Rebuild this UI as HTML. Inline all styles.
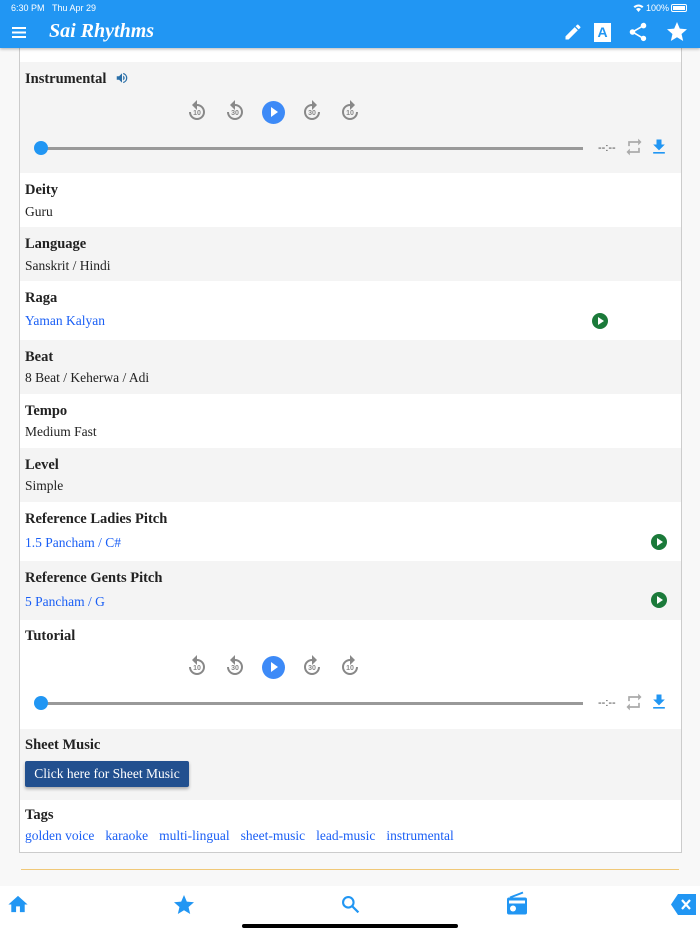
<!DOCTYPE html>
<html><head><meta charset="utf-8"><style>
*{margin:0;padding:0;box-sizing:border-box}
body{width:700px;height:934px;background:#f8f8f8;position:relative;overflow:hidden;font-family:"Liberation Serif",serif;color:#222}
.hdr{position:absolute;left:0;top:0;width:700px;height:48px;background:#2196f3;color:#fff;box-shadow:0 1px 3px rgba(0,0,0,.3);z-index:2}
.st{position:absolute;top:3px;font:9px "Liberation Sans",sans-serif}
.title{position:absolute;left:49px;top:20px;font:italic bold 20px "Liberation Serif",serif}
.card{position:absolute;left:19px;top:48px;width:663px;height:805px;background:#fff;border:1px solid #ccc;border-top:none}
.row{position:absolute;left:0;width:661px}
.g{background:#f4f4f4}
.lab{position:absolute;left:5px;font-weight:bold;font-size:14.5px}
.val{position:absolute;left:5px;font-size:13.5px}
.blue{color:#1a5ff5}
.pb{position:absolute;width:16px;height:16px;border-radius:50%;background:#1b7a3a}
.pb:after{content:"";position:absolute;left:6px;top:4px;border-left:6px solid #fff;border-top:4px solid transparent;border-bottom:4px solid transparent}
.ic{position:absolute;width:24px;height:24px}
.ic span{position:absolute;left:0;top:11px;width:24px;text-align:center;font:bold 7px "Liberation Sans",sans-serif;color:#888}
.play{position:absolute;width:23px;height:23px;border-radius:50%;background:#3d8af7}
.play:after{content:"";position:absolute;left:9px;top:6px;border-left:7px solid #fff;border-top:5.5px solid transparent;border-bottom:5.5px solid transparent}
.track{position:absolute;left:21px;width:542px;height:3px;background:#999}
.knob{position:absolute;left:14px;width:14px;height:14px;border-radius:50%;background:#2196f3}
.time{position:absolute;left:578px;font:11px "Liberation Sans",sans-serif;color:#444}
.btn{position:absolute;left:5px;top:32px;width:164px;height:26px;background:#22508f;color:#fff;font-size:13.5px;text-align:center;line-height:26px;border-radius:2px;box-shadow:0 2px 3px rgba(0,0,0,.3)}
.tags span{margin-right:11px}
.bot{position:absolute;left:0;top:886px;width:700px;height:48px;background:#fff}
</style></head><body>
<div class="hdr">
<div class="st" style="left:11px">6:30 PM&nbsp;&nbsp;&nbsp;Thu Apr 29</div>
<div class="st" style="left:646px">100%</div>
<svg style="position:absolute;left:633px;top:4px" width="11" height="8" viewBox="0 0 11 8"><path d="M0.5 2.5Q5.5-1.5 10.5 2.5L9 4Q5.5 1 2 4Z M3 5Q5.5 3 8 5L5.5 8Z" fill="#fff"/></svg>
<div style="position:absolute;left:671px;top:4px;width:16px;height:8px;border:1px solid #fff;border-radius:2px;padding:1px"><div style="background:#fff;width:100%;height:100%"></div></div>
<svg style="position:absolute;left:12px;top:27px" width="14" height="11"><rect y="0" width="14" height="2" fill="#fff"/><rect y="4.5" width="14" height="2" fill="#fff"/><rect y="9" width="14" height="2" fill="#fff"/></svg>
<div class="title">Sai Rhythms</div>
<svg style="position:absolute;left:563px;top:22px" width="20" height="20" viewBox="0 0 24 24"><path d="M3 17.25V21h3.75L17.81 9.94l-3.75-3.75L3 17.25zM20.71 7.04a1 1 0 000-1.41l-2.34-2.34a1 1 0 00-1.41 0l-1.83 1.83 3.75 3.75 1.83-1.83z" fill="#fff"/></svg>
<div style="position:absolute;left:594px;top:23px;width:17px;height:19px;background:#fff;color:#2196f3;font:bold 14px 'Liberation Sans',sans-serif;text-align:center;line-height:19px">A</div>
<svg style="position:absolute;left:627px;top:21px" width="22" height="22" viewBox="0 0 24 24"><path d="M18 16.08c-.76 0-1.44.3-1.96.77L8.91 12.7c.05-.23.09-.46.09-.7s-.04-.47-.09-.7l7.05-4.11A2.99 2.99 0 0021 5a3 3 0 10-5.910.7L8.04 9.81A3 3 0 003 12a3 3 0 005.04 2.19l7.12 4.16c-.05.21-.08.43-.08.65A2.92 2.92 0 1018 16.08z" fill="#fff"/></svg>
<svg style="position:absolute;left:665px;top:20px" width="24" height="24" viewBox="0 0 24 24"><path d="M12 17.27L18.18 21l-1.64-7.03L22 9.24l-7.19-.61L12 2 9.19 8.63 2 9.24l5.46 4.73L5.82 21z" fill="#fff"/></svg>
</div>

<div class="card">
<div class="row g" style="top:14px;height:111px">
<div class="lab" style="top:9px">Instrumental</div>
<svg style="position:absolute;left:95px;top:9px" width="14" height="14" viewBox="0 0 24 24"><path d="M3 9v6h4l5 5V4L7 9H3zm13.5 3A4.5 4.5 0 0014 8v8a4.5 4.5 0 002.5-4zM14 3.2v2.1a7 7 0 010 13.4v2.1a9 9 0 000-17.6z" fill="#2a6fa8"/></svg>
<div class="ic" style="left:165px;top:37px"><svg width="24" height="24" viewBox="0 0 24 24"><path d="M12 5V1L7 6l5 5V7c3.31 0 6 2.69 6 6s-2.69 6-6 6-6-2.69-6-6H4c0 4.42 3.58 8 8 8s8-3.58 8-8-3.58-8-8-8z" fill="#888"/></svg><span>10</span></div>
<div class="ic" style="left:203px;top:37px"><svg width="24" height="24" viewBox="0 0 24 24"><path d="M12 5V1L7 6l5 5V7c3.31 0 6 2.69 6 6s-2.69 6-6 6-6-2.69-6-6H4c0 4.42 3.58 8 8 8s8-3.58 8-8-3.58-8-8-8z" fill="#888"/></svg><span>30</span></div>
<div class="play" style="left:242px;top:39px"></div>
<div class="ic" style="left:280px;top:37px"><svg width="24" height="24" viewBox="0 0 24 24" style="transform:scaleX(-1)"><path d="M12 5V1L7 6l5 5V7c3.31 0 6 2.69 6 6s-2.69 6-6 6-6-2.69-6-6H4c0 4.42 3.58 8 8 8s8-3.58 8-8-3.58-8-8-8z" fill="#888"/></svg><span>30</span></div>
<div class="ic" style="left:318px;top:37px"><svg width="24" height="24" viewBox="0 0 24 24" style="transform:scaleX(-1)"><path d="M12 5V1L7 6l5 5V7c3.31 0 6 2.69 6 6s-2.69 6-6 6-6-2.69-6-6H4c0 4.42 3.58 8 8 8s8-3.58 8-8-3.58-8-8-8z" fill="#888"/></svg><span>10</span></div>
<div class="track" style="top:85px"></div><div class="knob" style="top:79px"></div>
<div class="time" style="top:80px">--:--</div>
<svg style="position:absolute;left:604px;top:75px" width="20" height="20" viewBox="0 0 24 24"><path d="M7 7h10v3l4-4-4-4v3H5v6h2V7zm10 10H7v-3l-4 4 4 4v-3h12v-6h-2v4z" fill="#aaa"/></svg>
<svg style="position:absolute;left:629px;top:75px" width="20" height="20" viewBox="0 0 24 24"><path d="M19 9h-4V3H9v6H5l7 7 7-7zM5 18v2h14v-2H5z" fill="#2196f3"/></svg>
</div>
<div class="row" style="top:125px;height:54px"><div class="lab" style="top:9px">Deity</div><div class="val" style="top:31px">Guru</div></div>
<div class="row g" style="top:179px;height:54px"><div class="lab" style="top:9px">Language</div><div class="val" style="top:31px">Sanskrit / Hindi</div></div>
<div class="row" style="top:233px;height:59px"><div class="lab" style="top:9px">Raga</div><div class="val blue" style="top:32px">Yaman Kalyan</div><div class="pb" style="left:572px;top:32px"></div></div>
<div class="row g" style="top:292px;height:54px"><div class="lab" style="top:9px">Beat</div><div class="val" style="top:30px">8 Beat / Keherwa / Adi</div></div>
<div class="row" style="top:346px;height:54px"><div class="lab" style="top:9px">Tempo</div><div class="val" style="top:30px">Medium Fast</div></div>
<div class="row g" style="top:400px;height:54px"><div class="lab" style="top:9px">Level</div><div class="val" style="top:30px">Simple</div></div>
<div class="row" style="top:454px;height:59px"><div class="lab" style="top:9px">Reference Ladies Pitch</div><div class="val blue" style="top:33px">1.5 Pancham / C#</div><div class="pb" style="left:631px;top:32px"></div></div>
<div class="row g" style="top:513px;height:59px"><div class="lab" style="top:9px">Reference Gents Pitch</div><div class="val blue" style="top:33px">5 Pancham / G</div><div class="pb" style="left:631px;top:31px"></div></div>
<div class="row" style="top:572px;height:109px"><div class="lab" style="top:8px">Tutorial</div>
<div class="ic" style="left:165px;top:34px"><svg width="24" height="24" viewBox="0 0 24 24"><path d="M12 5V1L7 6l5 5V7c3.31 0 6 2.69 6 6s-2.69 6-6 6-6-2.69-6-6H4c0 4.42 3.58 8 8 8s8-3.58 8-8-3.58-8-8-8z" fill="#888"/></svg><span>10</span></div>
<div class="ic" style="left:203px;top:34px"><svg width="24" height="24" viewBox="0 0 24 24"><path d="M12 5V1L7 6l5 5V7c3.31 0 6 2.69 6 6s-2.69 6-6 6-6-2.69-6-6H4c0 4.42 3.58 8 8 8s8-3.58 8-8-3.58-8-8-8z" fill="#888"/></svg><span>30</span></div>
<div class="play" style="left:242px;top:36px"></div>
<div class="ic" style="left:280px;top:34px"><svg width="24" height="24" viewBox="0 0 24 24" style="transform:scaleX(-1)"><path d="M12 5V1L7 6l5 5V7c3.31 0 6 2.69 6 6s-2.69 6-6 6-6-2.69-6-6H4c0 4.42 3.58 8 8 8s8-3.58 8-8-3.58-8-8-8z" fill="#888"/></svg><span>30</span></div>
<div class="ic" style="left:318px;top:34px"><svg width="24" height="24" viewBox="0 0 24 24" style="transform:scaleX(-1)"><path d="M12 5V1L7 6l5 5V7c3.31 0 6 2.69 6 6s-2.69 6-6 6-6-2.69-6-6H4c0 4.42 3.58 8 8 8s8-3.58 8-8-3.58-8-8-8z" fill="#888"/></svg><span>10</span></div>
<div class="track" style="top:82px"></div><div class="knob" style="top:76px"></div>
<div class="time" style="top:77px">--:--</div>
<svg style="position:absolute;left:604px;top:72px" width="20" height="20" viewBox="0 0 24 24"><path d="M7 7h10v3l4-4-4-4v3H5v6h2V7zm10 10H7v-3l-4 4 4 4v-3h12v-6h-2v4z" fill="#aaa"/></svg>
<svg style="position:absolute;left:629px;top:72px" width="20" height="20" viewBox="0 0 24 24"><path d="M19 9h-4V3H9v6H5l7 7 7-7zM5 18v2h14v-2H5z" fill="#2196f3"/></svg>
</div>
<div class="row g" style="top:681px;height:71px"><div class="lab" style="top:8px">Sheet Music</div><div class="btn">Click here for Sheet Music</div></div>
<div class="row" style="top:752px;height:52px"><div class="lab" style="top:7px">Tags</div><div class="val blue tags" style="top:28px"><span>golden voice</span><span>karaoke</span><span>multi-lingual</span><span>sheet-music</span><span>lead-music</span><span>instrumental</span></div></div>
</div>
<div style="position:absolute;left:21px;top:869px;width:658px;height:1px;background:#f0c878"></div>

<div class="bot">
<svg style="position:absolute;left:6px;top:7px" width="24" height="23" viewBox="0 0 24 24"><path d="M10 20v-6h4v6h5v-8h3L12 3 2 12h3v8z" fill="#2196f3"/></svg>
<svg style="position:absolute;left:172px;top:7px" width="24" height="24" viewBox="0 0 24 24"><path d="M12 17.27L18.18 21l-1.64-7.03L22 9.24l-7.19-.61L12 2 9.19 8.63 2 9.24l5.46 4.73L5.82 21z" fill="#2196f3"/></svg>
<svg style="position:absolute;left:340px;top:8px" width="21" height="21" viewBox="0 0 24 24"><circle cx="9.5" cy="9.5" r="6" fill="none" stroke="#2196f3" stroke-width="2.4"/><path d="M14 14l7 7" stroke="#2196f3" stroke-width="2.6"/></svg>
<svg style="position:absolute;left:506px;top:5px" width="22" height="25" viewBox="0 0 22 24"><path d="M4 6L17 1" stroke="#2196f3" stroke-width="2"/><rect x="1" y="6" width="20" height="17" rx="2" fill="#2196f3"/><circle cx="7" cy="17" r="3" fill="#fff"/><rect x="3" y="9" width="16" height="3" fill="#fff"/></svg>
<svg style="position:absolute;left:671px;top:8px" width="25" height="21" viewBox="0 0 25 21"><path d="M7 0H25V21H7L0 10.5Z" fill="#2196f3"/><path d="M11 6l8 9M19 6l-8 9" stroke="#fff" stroke-width="2.2"/></svg>
</div>
<div style="position:absolute;left:242px;top:924px;width:216px;height:4px;border-radius:2px;background:#000"></div>
</body></html>
